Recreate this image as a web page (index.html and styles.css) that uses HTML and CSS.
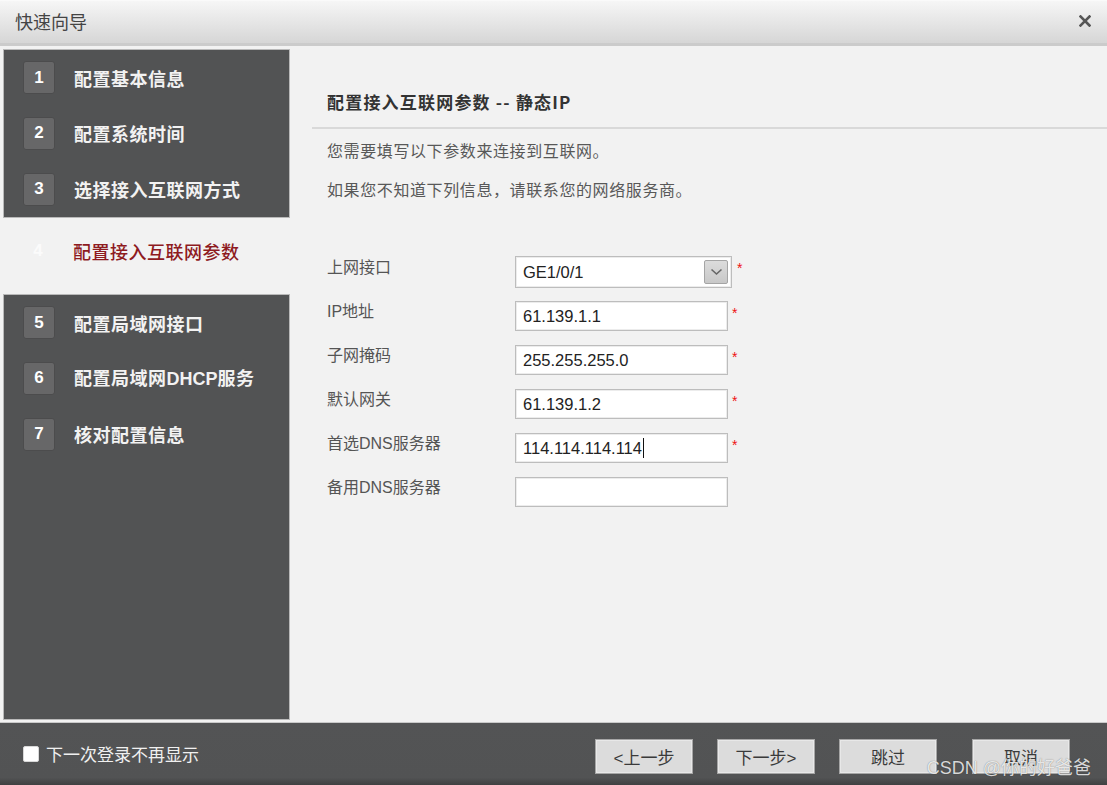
FILE: index.html
```html
<!DOCTYPE html>
<html lang="zh-CN">
<head>
<meta charset="utf-8">
<title>快速向导</title>
<link rel="stylesheet" href="styles.css">
</head>
<body>
<div class="window">
  <header class="titlebar">
    <span class="title">快速向导</span>
    <span class="close" aria-label="关闭">
      <svg width="12" height="12" viewBox="0 0 12 12"><path d="M1.5 1.5 L10.5 10.5 M10.5 1.5 L1.5 10.5" stroke="#555" stroke-width="2.6" stroke-linecap="square"/></svg>
    </span>
  </header>

  <div class="main">
    <nav class="sidebar">
      <div class="group group-top">
        <div class="step"><span class="num">1</span><span class="step-label">配置基本信息</span></div>
        <div class="step"><span class="num">2</span><span class="step-label">配置系统时间</span></div>
        <div class="step"><span class="num">3</span><span class="step-label">选择接入互联网方式</span></div>
      </div>
      <div class="step step-active"><span class="num">4</span><span class="step-label">配置接入互联网参数</span></div>
      <div class="group group-bottom">
        <div class="step"><span class="num">5</span><span class="step-label">配置局域网接口</span></div>
        <div class="step"><span class="num">6</span><span class="step-label">配置局域网<b class="latin">DHCP</b>服务</span></div>
        <div class="step"><span class="num">7</span><span class="step-label">核对配置信息</span></div>
      </div>
    </nav>

    <section class="content">
      <h2 class="heading">配置接入互联网参数 -- 静态IP</h2>
      <div class="intro">
        <p>您需要填写以下参数来连接到互联网。</p>
        <p>如果您不知道下列信息，请联系您的网络服务商。</p>
      </div>
      <div class="form">
        <div class="row">
          <span class="label">上网接口</span>
          <div class="select">
            <span class="value">GE1/0/1</span>
            <span class="select-btn">
              <svg width="13" height="8" viewBox="0 0 13 8"><path d="M1.5 1.5 L6.5 6 L11.5 1.5" fill="none" stroke="#666" stroke-width="1.6"/></svg>
            </span>
          </div>
          <span class="req">*</span>
        </div>
        <div class="row">
          <span class="label">IP地址</span>
          <div class="input"><span class="value">61.139.1.1</span></div>
          <span class="req">*</span>
        </div>
        <div class="row">
          <span class="label">子网掩码</span>
          <div class="input"><span class="value">255.255.255.0</span></div>
          <span class="req">*</span>
        </div>
        <div class="row">
          <span class="label">默认网关</span>
          <div class="input"><span class="value">61.139.1.2</span></div>
          <span class="req">*</span>
        </div>
        <div class="row">
          <span class="label">首选DNS服务器</span>
          <div class="input"><span class="value caret">114.114.114.114</span></div>
          <span class="req">*</span>
        </div>
        <div class="row">
          <span class="label">备用DNS服务器</span>
          <div class="input"><span class="value"></span></div>
        </div>
      </div>
    </section>
  </div>

  <footer class="footer">
    <label class="check">
      <span class="checkbox"></span>
      <span class="check-text">下一次登录不再显示</span>
    </label>
    <div class="buttons">
      <button class="btn">&lt;上一步</button>
      <button class="btn">下一步&gt;</button>
      <button class="btn">跳过</button>
      <button class="btn btn-cancel">取消</button>
    </div>
    <span class="watermark">CSDN @你的好爸爸</span>
  </footer>
</div>
</body>
</html>
```

FILE: styles.css
```css
* { box-sizing: border-box; }

html, body {
  margin: 0;
  padding: 0;
}

body {
  width: 1107px;
  height: 785px;
  overflow: hidden;
  font-family: "Liberation Sans", "Noto Sans CJK SC", sans-serif;
  background: #f2f2f2;
}

.window {
  display: flex;
  flex-direction: column;
  height: 785px;
  position: relative;
}

/* Title bar */
.titlebar {
  height: 46px;
  flex: none;
  display: flex;
  align-items: center;
  justify-content: space-between;
  padding: 0 16px 2px 15px;
  background: linear-gradient(#f6f6f6, #e6e6e6 50%, #d6d6d6);
  border-top: 1px solid #fafafa;
  border-bottom: 3px solid #cbcbcb;
}

.title {
  font-family: "Noto Sans CJK SC", sans-serif;
  font-size: 18px;
  line-height: 24px;
  color: #444;
}

.close {
  display: flex;
  width: 12px;
  height: 12px;
}

/* Main area */
.main {
  flex: 1;
  display: flex;
  min-height: 0;
}

.sidebar {
  width: 290px;
  flex: none;
  display: flex;
  flex-direction: column;
  padding: 3px 0 2px 3px;
}

.group {
  background: #525354;
  border: 1px solid #b9b9b9;
}

.group-bottom {
  flex: 1;
}

.step {
  height: 56px;
  display: flex;
  align-items: center;
  padding-left: 19px;
}

.group-top .step:first-child,
.group-bottom .step:first-child {
  height: 55px;
}

.num {
  width: 32px;
  height: 33px;
  flex: none;
  display: flex;
  align-items: center;
  justify-content: center;
  background: #676768;
  border: 1px solid #4c4c4d;
  border-radius: 3px;
  color: #fff;
  font-family: "Liberation Sans", sans-serif;
  font-weight: bold;
  font-size: 17px;
}

.step-label {
  margin-left: 19px;
  font-family: "Noto Sans CJK SC", sans-serif;
  font-weight: bold;
  font-size: 18px;
  line-height: 26px;
  letter-spacing: 0.5px;
  color: #f2f2f2;
}

.step-label .latin {
  font-family: "Liberation Sans", sans-serif;
  font-weight: bold;
  letter-spacing: 0;
}

.step-active {
  height: 76px;
  align-items: flex-start;
  padding-top: 20px;
}

.step-active .num {
  background: transparent;
  border-color: transparent;
  height: 26px;
  color: #fbfbfb;
}

.step-active .step-label {
  color: #8e1b1f;
  font-weight: 500;
}

/* Content */
.content {
  flex: 1;
  padding: 43px 0 0 22px;
}

.heading {
  margin: 0;
  padding: 0 0 12px 15px;
  font-family: "Noto Sans CJK SC", sans-serif;
  font-size: 17px;
  font-weight: bold;
  line-height: 26px;
  letter-spacing: 1.2px;
  color: #333;
  border-bottom: 2px solid #d9d9d9;
}

.intro {
  padding: 9px 0 0 15px;
}

.intro p {
  margin: 0 0 15px;
  font-family: "Noto Sans CJK SC", sans-serif;
  font-size: 16px;
  line-height: 24px;
  letter-spacing: 0.6px;
  color: #585858;
}

.form {
  padding: 40px 0 0 15px;
}

.row {
  height: 44px;
  display: flex;
  align-items: flex-start;
}

.label {
  width: 188px;
  flex: none;
  margin-top: 1px;
  font-family: "Liberation Sans", "Noto Sans CJK SC", sans-serif;
  font-size: 16px;
  line-height: 22px;
  color: #555;
}

.input,
.select {
  width: 213px;
  height: 30px;
  margin-top: 1px;
  display: flex;
  align-items: center;
  background: #fff;
  border: 1px solid #bdbdbd;
  box-shadow: inset 0 0 0 1px #ececec;
  padding-left: 7px;
}

.select {
  width: 217px;
  height: 32px;
  margin-top: 0;
  justify-content: space-between;
  padding-right: 3px;
}

.value {
  font-family: "Liberation Sans", sans-serif;
  font-size: 16.5px;
  line-height: 20px;
  color: #222;
}

.caret {
  border-right: 1px solid #111;
  padding-right: 1px;
}

.select-btn {
  width: 24px;
  height: 24px;
  display: flex;
  align-items: center;
  justify-content: center;
  background: linear-gradient(#dcdcdc, #c8c8c8);
  border: 1px solid #a5a5a5;
  border-radius: 2px;
}

.req {
  margin-left: 4px;
  margin-top: 6px;
  font-family: "Liberation Sans", sans-serif;
  font-size: 14px;
  line-height: 14px;
  color: #ee1111;
}

.select + .req {
  margin-left: 5px;
  margin-top: 5px;
}

/* Footer */
.footer {
  height: 63px;
  flex: none;
  display: flex;
  align-items: center;
  padding: 0 37px 0 23px;
  background: linear-gradient(#535455, #525354 88%, #3f4041);
  border-top: 1px solid #c9c9c9;
}

.check {
  display: flex;
  align-items: center;
}

.checkbox {
  width: 16px;
  height: 16px;
  background: #fff;
  border: 1px solid #d8d8d8;
  border-radius: 2px;
}

.check-text {
  margin-left: 7px;
  font-family: "Noto Sans CJK SC", sans-serif;
  font-size: 17px;
  line-height: 22px;
  color: #f0f0f0;
}

.buttons {
  margin-left: auto;
  margin-top: 4px;
  display: flex;
  gap: 24px;
}

.btn {
  width: 98px;
  height: 35px;
  padding: 0;
  background: #dcdcdc;
  border: 1px solid #a6a6a6;
  box-shadow: inset 0 0 0 1px #e8e8e8;
  font-family: "Liberation Sans", "Noto Sans CJK SC", sans-serif;
  font-size: 17px;
  color: #3a3a3a;
}

.btn-cancel {
  margin-left: 11px;
}

.watermark {
  position: absolute;
  right: 16px;
  bottom: 6px;
  font-family: "Liberation Sans", "Noto Sans CJK SC", sans-serif;
  font-size: 18px;
  line-height: 22px;
  color: rgba(255, 255, 255, 0.82);
  text-shadow: 0 0 1px rgba(0, 0, 0, 0.5);
}
```
